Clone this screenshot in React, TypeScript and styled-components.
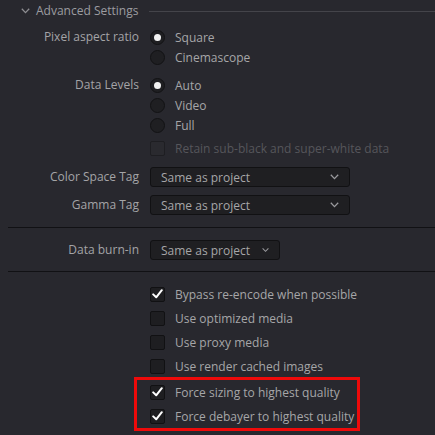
import React from "react";
import styled, { createGlobalStyle } from "styled-components";

const Global = createGlobalStyle`
  html, body { margin: 0; padding: 0; background: #28282e; }
  body { font-family: "Open Sans", "Noto Sans", sans-serif; font-size: 12px; color: #a6a6a8; }
  * { box-sizing: border-box; }
`;

const Page = styled.div`
  width: 435px;
  height: 435px;
  overflow: hidden;
  background: #28282e;
`;

const Header = styled.div`
  display: flex;
  align-items: center;
  height: 22px;
  padding-left: 21px;
  color: #9c9ca0;
`;

const HeaderTitle = styled.span`
  margin-left: 6px;
  line-height: 22px;
  white-space: nowrap;
`;

const HeaderLine = styled.div`
  flex: 1;
  height: 1px;
  margin-left: 11px;
  background: #44444a;
`;

const Body = styled.div`
  padding-top: 5px;
  display: flex;
  flex-direction: column;
`;

const Row = styled.div<{ $mt?: number }>`
  display: flex;
  align-items: flex-start;
  margin-top: ${(p) => p.$mt ?? 0}px;
`;

const Label = styled.div<{ $h?: number }>`
  width: 139px;
  text-align: right;
  line-height: ${(p) => p.$h ?? 20}px;
  white-space: nowrap;
  color: #a4a4a7;
`;

const Controls = styled.div`
  margin-left: 11px;
  display: flex;
  flex-direction: column;
`;

const Option = styled.div<{ $h?: number; $disabled?: boolean }>`
  display: flex;
  align-items: center;
  height: ${(p) => p.$h ?? 20}px;
  gap: 10px;
  white-space: nowrap;
  color: ${(p) => (p.$disabled ? "#56565b" : "#a6a6a8")};
`;

const RadioDot = styled.span<{ $on?: boolean }>`
  width: 15px;
  height: 15px;
  border-radius: 50%;
  background: #1f1f22;
  border: 1px solid #121214;
  display: flex;
  align-items: center;
  justify-content: center;
  &::after {
    content: "";
    width: 7px;
    height: 7px;
    border-radius: 50%;
    background: #f2f2f2;
    display: ${(p) => (p.$on ? "block" : "none")};
  }
`;

const Box = styled.span<{ $disabled?: boolean }>`
  width: 15px;
  height: 15px;
  border-radius: 2px;
  background: ${(p) => (p.$disabled ? "#2a2a2f" : "#1e1e21")};
  border: 1px solid ${(p) => (p.$disabled ? "#1e1e22" : "#111113")};
  display: flex;
  align-items: center;
  justify-content: center;
`;

const Select = styled.div<{ $w: number }>`
  width: ${(p) => p.$w}px;
  height: 20px;
  border: 1px solid #111113;
  border-radius: 3px;
  background: #1f1f22;
  display: flex;
  align-items: center;
  justify-content: space-between;
  padding: 0 10px 0 10px;
  color: #a6a6a8;
  white-space: nowrap;
`;

const Divider = styled.div<{ $mt: number }>`
  height: 1px;
  margin: ${(p) => p.$mt}px 0 0 8px;
  background: #111114;
`;

const CheckList = styled.div`
  margin-top: 10px;
  margin-left: 150px;
  display: flex;
  flex-direction: column;
`;

const Highlight = styled.div`
  margin: -1px 0 0 -16px;
  width: 226px;
  border: 3px solid #ee0a0a;
  padding-left: 13px;
`;

const Chevron = ({ c = "#9a9a9e" }: { c?: string }) => (
  <svg width="9" height="6" viewBox="0 0 9 6">
    <path d="M0.8 0.8 L4.5 4.6 L8.2 0.8" fill="none" stroke={c} strokeWidth="1.3" />
  </svg>
);

const Check = () => (
  <svg width="11" height="10" viewBox="0 0 11 10">
    <path d="M1.2 5.4 L4.2 8.3 L9.8 1.2" fill="none" stroke="#ffffff" strokeWidth="2" strokeLinecap="round" strokeLinejoin="round" />
  </svg>
);

const Radio = ({ on, text }: { on?: boolean; text: string }) => (
  <Option>
    <RadioDot $on={on} />
    <span>{text}</span>
  </Option>
);

const CheckRow = ({ on, text, disabled }: { on?: boolean; text: string; disabled?: boolean }) => (
  <Option $h={24} $disabled={disabled}>
    <Box $disabled={disabled}>{on && <Check />}</Box>
    <span>{text}</span>
  </Option>
);

const Dropdown = ({ w, text, compact }: { w: number; text: string; compact?: boolean }) => (
  <Select $w={w} style={compact ? { justifyContent: "flex-start", gap: 12 } : undefined}>
    <span>{text}</span>
    <Chevron />
  </Select>
);

export default function App() {
  return (
    <Page>
      <Global />
      <Header>
        <Chevron c="#8e8e92" />
        <HeaderTitle>Advanced Settings</HeaderTitle>
        <HeaderLine />
      </Header>
      <Body>
        <Row>
          <Label>Pixel aspect ratio</Label>
          <Controls>
            <Radio on text="Square" />
            <Radio text="Cinemascope" />
          </Controls>
        </Row>
        <Row $mt={8}>
          <Label>Data Levels</Label>
          <Controls>
            <Radio on text="Auto" />
            <Radio text="Video" />
            <Radio text="Full" />
            <Option $disabled style={{ marginTop: 3 }}>
              <Box $disabled />
              <span>Retain sub-black and super-white data</span>
            </Option>
          </Controls>
        </Row>
        <Row $mt={9}>
          <Label>Color Space Tag</Label>
          <Controls>
            <Dropdown w={200} text="Same as project" />
          </Controls>
        </Row>
        <Row $mt={8}>
          <Label>Gamma Tag</Label>
          <Controls>
            <Dropdown w={200} text="Same as project" />
          </Controls>
        </Row>
        <Divider $mt={12} />
        <Row $mt={12}>
          <Label>Data burn-in</Label>
          <Controls>
            <Dropdown w={130} text="Same as project" compact />
          </Controls>
        </Row>
        <Divider $mt={11} />
        <CheckList>
          <CheckRow on text="Bypass re-encode when possible" />
          <CheckRow text="Use optimized media" />
          <CheckRow text="Use proxy media" />
          <CheckRow text="Use render cached images" />
          <Highlight>
            <CheckRow on text="Force sizing to highest quality" />
            <CheckRow on text="Force debayer to highest quality" />
          </Highlight>
        </CheckList>
      </Body>
    </Page>
  );
}
